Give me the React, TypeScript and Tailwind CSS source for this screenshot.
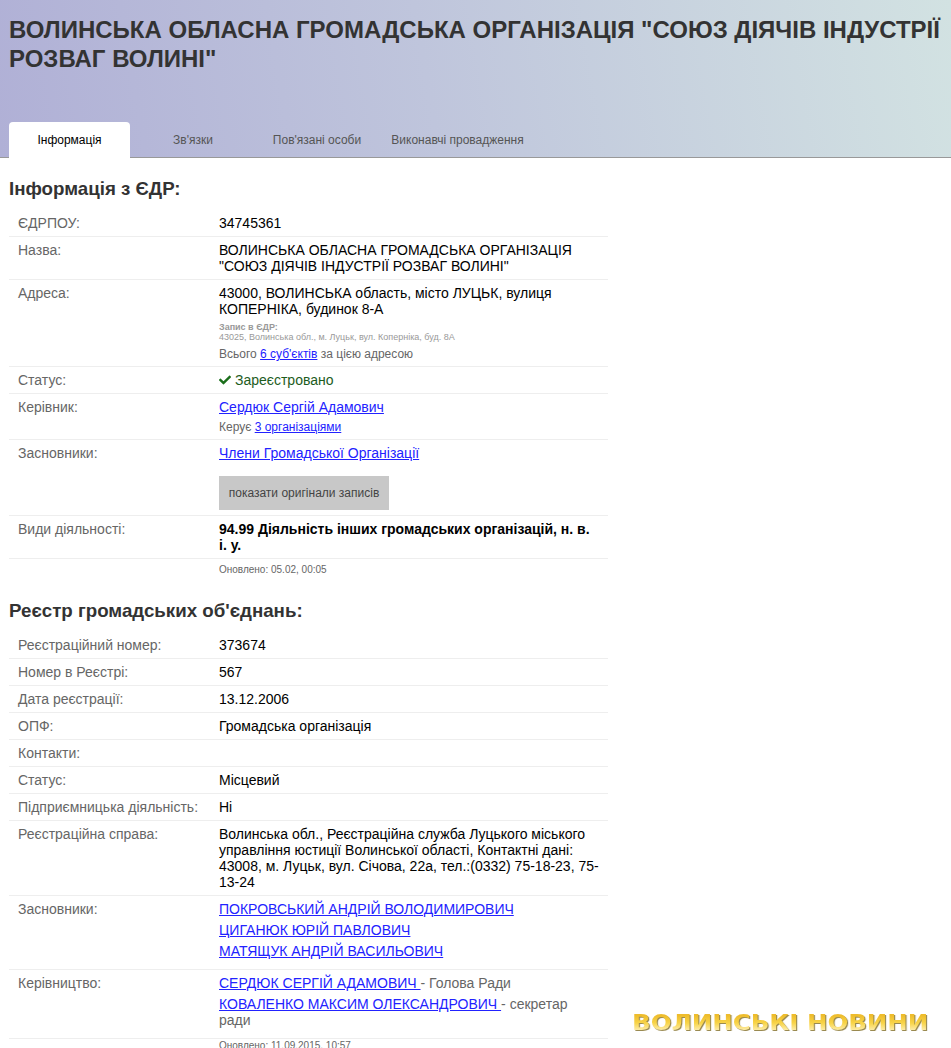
import { ReactNode } from 'react'
import { FaCheck } from 'react-icons/fa'

function Row({ label, children }: { label: string; children?: ReactNode }) {
  return (
    <div className="flex border-b border-[#eeeeee] py-[5px] leading-4">
      <div className="w-[210px] shrink-0 pl-[9px] text-[#666666]">{label}</div>
      <div className="min-w-0 flex-1 pr-2 text-black">{children}</div>
    </div>
  )
}

function A({ children }: { children: ReactNode }) {
  return <a href="#" className="text-[#2222ff] underline">{children}</a>
}

function Tab({ label, active, width }: { label: string; active?: boolean; width: string }) {
  return (
    <div
      className={
        active
          ? 'flex h-[36px] w-[121px] items-center justify-center rounded-t-[4px] bg-white pb-[1px] text-black'
          : `flex h-[35px] ${width} items-center justify-center pb-[2px] text-[#555555]`
      }
    >
      {label}
    </div>
  )
}

export default function App() {
  return (
    <div className="relative h-screen overflow-hidden bg-white font-['Liberation_Sans',Arial,sans-serif] text-sm">
      <header className="flex h-[158px] flex-col justify-between border-b border-[#999999] bg-[linear-gradient(80deg,#b0b0d6_0%,#bfc5dc_45%,#d2e2e2_100%)] pl-[9px] pt-[15px]">
        <h1 className="pr-1 text-2xl leading-[29px] font-bold text-[#333333]">
          ВОЛИНСЬКА ОБЛАСНА ГРОМАДСЬКА ОРГАНІЗАЦІЯ "СОЮЗ ДІЯЧІВ ІНДУСТРІЇ РОЗВАГ ВОЛИНІ"
        </h1>
        <nav className="-mb-px flex items-end text-xs">
          <Tab label="Інформація" active width="w-[121px]" />
          <Tab label="Зв'язки" width="w-[126px]" />
          <Tab label="Пов'язані особи" width="w-[122px]" />
          <Tab label="Виконавчі провадження" width="w-[159px]" />
        </nav>
      </header>

      <main className="w-[608px] pl-[9px]">
        <h2 className="pt-[20px] pb-[11px] text-[18.72px] leading-[21px] font-bold text-[#333333]">Інформація з ЄДР:</h2>
        <Row label="ЄДРПОУ:">34745361</Row>
        <Row label="Назва:">ВОЛИНСЬКА ОБЛАСНА ГРОМАДСЬКА ОРГАНІЗАЦІЯ "СОЮЗ ДІЯЧІВ ІНДУСТРІЇ РОЗВАГ ВОЛИНІ"</Row>
        <Row label="Адреса:">
          43000, ВОЛИНСЬКА область, місто ЛУЦЬК, вулиця КОПЕРНІКА, будинок 8-А
          <div className="pt-[5px] text-[9px] leading-[10px] text-[#999999]">
            <b>Запис в ЄДР:</b>
            <br />
            43025, Волинська обл., м. Луцьк, вул. Коперніка, буд. 8А
          </div>
          <div className="pt-[5px] text-xs leading-[14px] text-[#666666]">
            Всього <A>6 суб'єктів</A> за цією адресою
          </div>
        </Row>
        <Row label="Статус:">
          <span className="flex items-center gap-[4px] text-[#1d5c1d]">
            <FaCheck className="size-3 text-[#1a6e1a]" />
            Зареєстровано
          </span>
        </Row>
        <Row label="Керівник:">
          <A>Сердюк Сергій Адамович</A>
          <div className="pt-[5px] text-xs leading-[14px] text-[#666666]">
            Керує <A>3 організаціями</A>
          </div>
        </Row>
        <Row label="Засновники:">
          <A>Члени Громадської Організації</A>
          <button className="mt-[15px] mb-0 block h-[34px] w-[170px] bg-[#c8c8c8] text-xs text-[#444444]">
            показати оригінали записів
          </button>
        </Row>
        <Row label="Види діяльності:">
          <b>94.99 Діяльність інших громадських організацій, н. в. і. у.</b>
        </Row>
        <div className="pt-[5px] pl-[210px] text-[10px] leading-[12px] text-[#666666]">Оновлено: 05.02, 00:05</div>

        <h2 className="pt-[24px] pb-[11px] text-[18.72px] leading-[21px] font-bold text-[#333333]">Реєстр громадських об'єднань:</h2>
        <Row label="Реєстраційний номер:">373674</Row>
        <Row label="Номер в Реєстрі:">567</Row>
        <Row label="Дата реєстрації:">13.12.2006</Row>
        <Row label="ОПФ:">Громадська організація</Row>
        <Row label="Контакти:" />
        <Row label="Статус:">Місцевий</Row>
        <Row label="Підприємницька діяльність:">Ні</Row>
        <Row label="Реєстраційна справа:">
          Волинська обл., Реєстраційна служба Луцького міського управління юстиції Волинської області, Контактні дані: 43008, м. Луцьк, вул. Січова, 22а, тел.:(0332) 75-18-23, 75-13-24
        </Row>
        <Row label="Засновники:">
          <div className="pb-[5px]"><A>ПОКРОВСЬКИЙ АНДРІЙ ВОЛОДИМИРОВИЧ</A></div>
          <div className="pb-[5px]"><A>ЦИГАНЮК ЮРІЙ ПАВЛОВИЧ</A></div>
          <div className="pb-[5px]"><A>МАТЯЩУК АНДРІЙ ВАСИЛЬОВИЧ</A></div>
        </Row>
        <Row label="Керівництво:">
          <div className="pb-[5px] text-[#666666]"><A>СЕРДЮК СЕРГІЙ АДАМОВИЧ </A> - Голова Ради</div>
          <div className="pb-[5px] text-[#666666]"><A>КОВАЛЕНКО МАКСИМ ОЛЕКСАНДРОВИЧ </A> - секретар ради</div>
        </Row>
        <div className="pt-[1px] pl-[210px] text-[10px] leading-[12px] text-[#666666]">Оновлено: 11.09.2015, 10:57</div>
      </main>

      <div className="absolute top-[1012px] left-[632px] origin-left scale-x-[1.165] bg-[linear-gradient(180deg,#eebc2c_15%,#f8d448_50%,#fdeeb0_85%)] bg-clip-text font-['DejaVu_Sans',sans-serif] text-[21px] leading-[22px] font-bold whitespace-nowrap text-transparent drop-shadow-[1px_1px_0_#9a8a50]">
        ВОЛИНСЬКІ НОВИНИ
      </div>
    </div>
  )
}
